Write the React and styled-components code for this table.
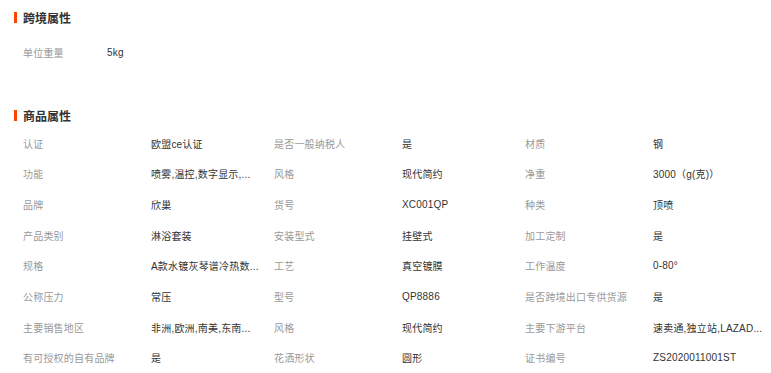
import styled, { createGlobalStyle } from 'styled-components'

const GlobalStyle = createGlobalStyle`
    body {
        margin: 0;
        background: #fff;
        font-family: "Liberation Sans", "Noto Sans CJK SC", sans-serif;
    }
`

const Page = styled.div`
    width: 771px;
    padding: 9px 0 0 14px;
    box-sizing: border-box;
`

const Section = styled.section`
    margin-bottom: ${p => p.$gap || 0}px;
`

const Title = styled.h3`
    display: flex;
    align-items: center;
    gap: 6px;
    margin: 0;
    height: 16px;
    font-size: 12px;
    font-weight: bold;
    color: #333;
    &::before {
        content: "";
        width: 3px;
        height: 11px;
        background: #ff4400;
    }
`

const Grid = styled.div`
    display: grid;
    grid-template-columns: repeat(${p => p.$cols}, ${p => p.$colWidth}px);
    grid-auto-rows: 30.7px;
    padding-left: 9px;
    margin-top: ${p => p.$top}px;
`

const Cell = styled.div`
    display: grid;
    grid-template-columns: ${p => p.$labelWidth}px 1fr;
    align-items: center;
    font-size: 10px;
    white-space: nowrap;
    overflow: hidden;
`

const Label = styled.span`
    color: #999;
    letter-spacing: 0.2px;
`

const Value = styled.span`
    color: #333;
    letter-spacing: 0.2px;
    overflow: hidden;
`

const crossBorder = [['单位重量', '5kg']]

const goods = [
    ['认证', '欧盟ce认证'], ['是否一般纳税人', '是'], ['材质', '钢'],
    ['功能', '喷雾,温控,数字显示,...'], ['风格', '现代简约'], ['净重', '3000（g(克)）'],
    ['品牌', '欣巢'], ['货号', 'XC001QP'], ['种类', '顶喷'],
    ['产品类别', '淋浴套装'], ['安装型式', '挂壁式'], ['加工定制', '是'],
    ['规格', 'A款水镀灰琴谱冷热数...'], ['工艺', '真空镀膜'], ['工作温度', '0-80°'],
    ['公称压力', '常压'], ['型号', 'QP8886'], ['是否跨境出口专供货源', '是'],
    ['主要销售地区', '非洲,欧洲,南美,东南...'], ['风格', '现代简约'], ['主要下游平台', '速卖通,独立站,LAZAD...'],
    ['有可授权的自有品牌', '是'], ['花洒形状', '圆形'], ['证书编号', 'ZS2020011001ST'],
]

const Attr = ({ label, value, labelWidth }) => (
    <Cell $labelWidth={labelWidth}>
        <Label>{label}</Label>
        <Value>{value}</Value>
    </Cell>
)

export default function App() {
    return <>
        <GlobalStyle />
        <Page>
            <Section $gap={40}>
                <Title>跨境属性</Title>
                <Grid $cols={1} $colWidth={251} $top={12}>
                    {crossBorder.map(([l, v], i) => <Attr key={i} label={l} value={v} labelWidth={84} />)}
                </Grid>
            </Section>
            <Section>
                <Title>商品属性</Title>
                <Grid $cols={3} $colWidth={251} $top={4}>
                    {goods.map(([l, v], i) => <Attr key={i} label={l} value={v} labelWidth={128} />)}
                </Grid>
            </Section>
        </Page>
    </>
}
